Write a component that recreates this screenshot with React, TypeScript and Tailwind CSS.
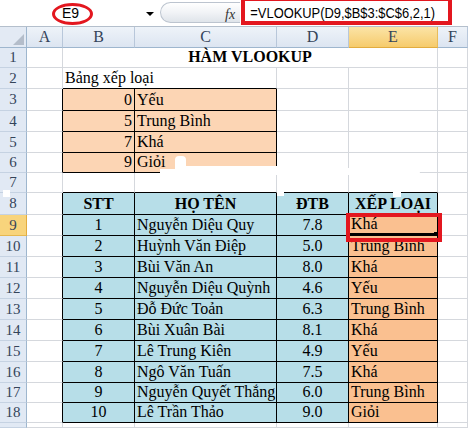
import React from 'react';

type Align = 'left' | 'center' | 'right';
type CellData = { text?: string; align?: Align; bg?: string; bold?: boolean; span?: number } | null;

const COLS = ['A', 'B', 'C', 'D', 'E', 'F'];
const PEACH = 'bg-[#fcd5b4]';
const BLUE = 'bg-[#b7dee8]';
const ORANGE = 'bg-[#fac090]';

const lookup: [string, string][] = [
  ['0', 'Yếu'],
  ['5', 'Trung Bình'],
  ['7', 'Khá'],
  ['9', 'Giỏi'],
];

const students: [string, string, string, string][] = [
  ['1', 'Nguyễn Diệu Quy', '7.8', 'Khá'],
  ['2', 'Huỳnh Văn Điệp', '5.0', 'Trung Bình'],
  ['3', 'Bùi Văn An', '8.0', 'Khá'],
  ['4', 'Nguyễn Diệu Quỳnh', '4.6', 'Yếu'],
  ['5', 'Đỗ Đức Toản', '6.3', 'Trung Bình'],
  ['6', 'Bùi Xuân Bài', '8.1', 'Khá'],
  ['7', 'Lê Trung Kiên', '4.9', 'Yếu'],
  ['8', 'Ngô Văn Tuấn', '7.5', 'Khá'],
  ['9', 'Nguyễn Quyết Thắng', '6.0', 'Trung Bình'],
  ['10', 'Lê Trần Thảo', '9.0', 'Giỏi'],
];

const inBox = (r: number, c: number) =>
  (r >= 3 && r <= 6 && (c === 1 || c === 2)) || (r >= 8 && r <= 18 && c >= 1 && c <= 4);

function rowCells(r: number): CellData[] {
  const cells: CellData[] = [{}, {}, {}, {}, {}, {}];
  if (r === 1) {
    cells[1] = { text: 'HÀM VLOOKUP', align: 'center', bold: true, span: 4 };
    cells[2] = cells[3] = cells[4] = null;
  }
  if (r === 2) cells[1] = { text: 'Bảng xếp loại' };
  if (r >= 3 && r <= 6) {
    const [n, label] = lookup[r - 3];
    cells[1] = { text: n, align: 'right', bg: PEACH };
    cells[2] = { text: label, bg: PEACH };
  }
  if (r === 8) {
    cells[1] = { text: 'STT', align: 'center', bold: true, bg: BLUE };
    cells[2] = { text: 'HỌ TÊN', align: 'center', bold: true, bg: BLUE };
    cells[3] = { text: 'ĐTB', align: 'center', bold: true, bg: BLUE };
    cells[4] = { text: 'XẾP LOẠI', align: 'center', bold: true, bg: BLUE };
  }
  if (r >= 9 && r <= 18) {
    const [stt, name, dtb, rank] = students[r - 9];
    cells[1] = { text: stt, align: 'center', bg: BLUE };
    cells[2] = { text: name, bg: BLUE };
    cells[3] = { text: dtb, align: 'center', bg: BLUE };
    cells[4] = { text: rank, bg: ORANGE };
  }
  return cells;
}

const justify: Record<Align, string> = {
  left: 'justify-start',
  center: 'justify-center',
  right: 'justify-end',
};

function Cell({ r, c, cell }: { r: number; c: number; cell: Exclude<CellData, null> }) {
  const last = c + (cell.span ?? 1) - 1;
  const noRight = r === 2 && c === 1;
  const right = noRight
    ? 'border-r-0'
    : inBox(r, last) || inBox(r, last + 1)
      ? 'border-r border-r-black'
      : 'border-r border-r-[#d5d8dd]';
  const active = r === 9 && c === 4;
  const bottom = active
    ? 'border-b-[3px] border-b-black'
    : inBox(r, c) || inBox(r + 1, c)
      ? 'border-b border-b-black'
      : 'border-b border-b-[#d5d8dd]';
  return (
    <div
      className={`flex items-end whitespace-nowrap px-[2px] text-[16px] leading-[18px] text-black ${active ? 'pb-0' : 'pb-[1px]'} ${
        cell.span === 4 ? 'col-span-4' : ''
      } ${justify[cell.align ?? 'left']} ${cell.bg ?? ''} ${cell.bold ? 'font-bold text-[15px]' : ''} ${right} ${bottom}`}
    >
      {cell.text}
    </div>
  );
}

function FormulaBar() {
  return (
    <div className="flex h-[27px] border-b border-b-[#b4bfcc] bg-white font-['Liberation_Sans',Arial,sans-serif]">
      <div className="flex w-[157px] items-center">
        <span className="pl-[62px] text-[14px] text-black">E9</span>
        <span className="ml-auto mr-[3px] mt-[1px] h-0 w-0 border-x-[4px] border-t-[4px] border-x-transparent border-t-black" />
      </div>
      <div className="relative w-[83px] pt-[2px]">
        <div className="ml-[3px] h-[21px] w-[80px] rounded-l-full border border-r-0 border-[#bcc4cf] bg-linear-to-b from-white via-[#f1f3f6] to-[#dfe4ea]" />
        <span className="absolute left-[68px] top-[4px] font-['Liberation_Serif',serif] text-[14px] italic text-[#333]">
          fx
        </span>
      </div>
      <div className="relative flex flex-1 items-center">
        <span className="origin-left scale-x-[0.86] pl-[12px] text-[15px] text-black">
          =VLOOKUP(D9,$B$3:$C$6,2,1)
        </span>
        <div className="absolute left-[1px] top-[-3px] h-[28px] w-[211px] border-[4px] border-[#e3171f]" />
      </div>
    </div>
  );
}

export default function App() {
  const rows = Array.from({ length: 19 }, (_, i) => i + 1);
  return (
    <div className="relative h-[428px] w-[468px] overflow-hidden bg-white font-['Liberation_Serif','Times_New_Roman',serif]">
      <FormulaBar />
      <div className="grid grid-cols-[27px_36px_72px_142px_72px_89px_30px] grid-rows-[21px_20px_21px_22px_21px_21px_20px_20px_22px_21px_21px_21px_21px_21px_21px_21px_21px_20px_20px_5px]">
        {/* corner */}
        <div className="relative border-b border-r border-b-[#9eb6ce] border-r-[#9eb6ce] bg-[#e3eaf4]">
          <svg className="absolute bottom-[2px] right-[2px]" width="11" height="11" viewBox="0 0 11 11">
            <polygon points="11,0 11,11 0,11" fill="#b4bdca" />
          </svg>
        </div>
        {COLS.map((col) => (
          <div
            key={col}
            className={`flex items-center justify-center border-b border-r text-[16px] text-[#34445a] ${
              col === 'E'
                ? 'border-b-[#e2ac3f] border-r-[#e8bc5a] bg-linear-to-b from-[#fbe4a6] to-[#f6cb6b]'
                : 'border-b-[#9eb6ce] border-r-[#b8c7da] bg-linear-to-b from-[#eef3f9] to-[#dce5f1]'
            }`}
          >
            {col}
          </div>
        ))}
        {rows.map((r) => (
          <React.Fragment key={r}>
            <div
              className={`flex items-center justify-center border-r border-b text-[15px] leading-none text-[#34445a] ${
                r === 9
                  ? 'border-r-[#e2ac3f] border-b-[#e6b850] bg-[#f8d47c]'
                  : 'border-r-[#9eb6ce] border-b-[#c5d2e2] bg-[#e1e9f4]'
              }`}
            >
              {r < 19 ? r : null}
            </div>
            {rowCells(r).map((cell, c) =>
              cell ? <Cell key={c} r={r} c={c} cell={cell} /> : null
            )}
          </React.Fragment>
        ))}
      </div>

      {/* annotations drawn over the sheet */}
      <div className="absolute left-[52px] top-[3px] h-[22px] w-[41px] rounded-[50%] border-[3px] border-[#e3171f]" />
      <div className="absolute left-[434px] top-[232px] h-[4px] w-[4px] bg-black" />
      <div className="absolute left-[346px] top-[213px] h-[29px] w-[96px] border-[4px] border-[#e3171f]" />

      {/* white retouch marks */}
      <div className="absolute left-[3px] top-[190px] h-[7px] w-[7px] bg-white" />
      <div className="absolute left-[175px] top-[156px] h-[19px] w-[11px] rounded-sm bg-white" />
      <div className="absolute left-[160px] top-[169px] h-[6px] w-[20px] bg-white" />
      <div className="absolute left-[180px] top-[166px] h-[9px] w-[110px] rounded-sm bg-white" />
      <div className="absolute left-[288px] top-[168px] h-[7px] w-[132px] rounded-sm bg-white" />
      <div className="absolute left-[277px] top-[192px] h-[4px] w-[7px] bg-white" />
      <div className="absolute left-[393px] top-[192px] h-[5px] w-[8px] bg-white" />
    </div>
  );
}
